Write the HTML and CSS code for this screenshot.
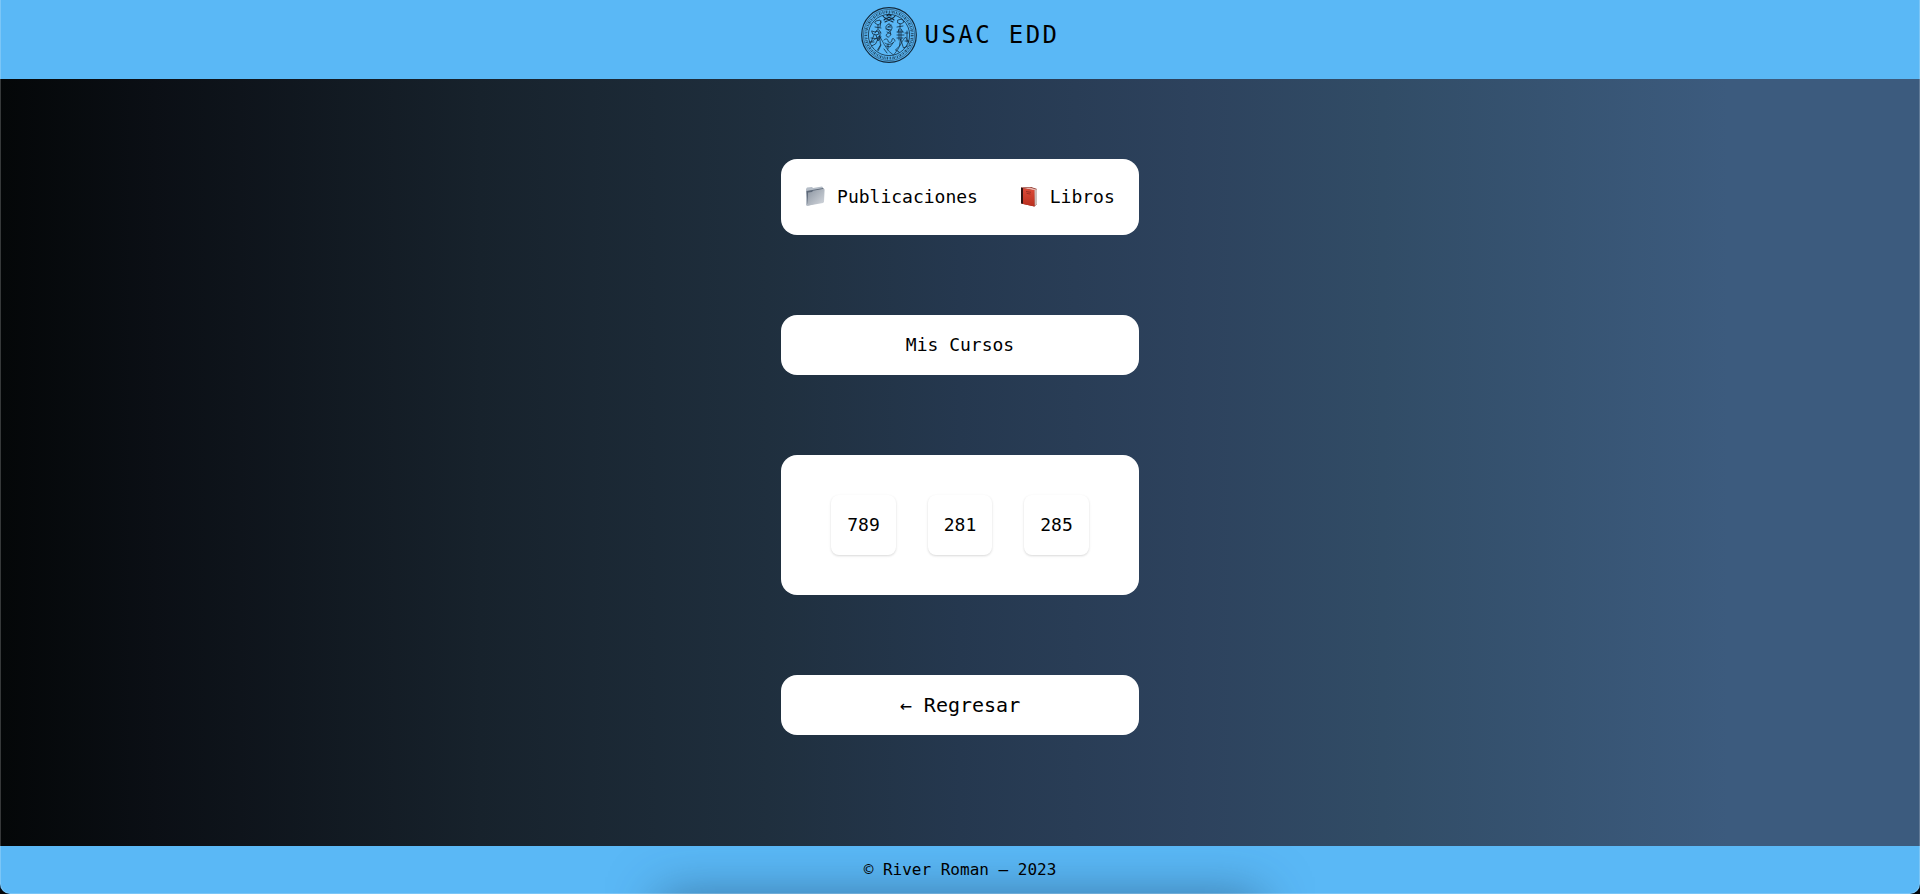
FILE: index.html
```html
<!DOCTYPE html>
<html lang="es">
<head>
<meta charset="utf-8">
<meta name="viewport" content="width=device-width, initial-scale=1">
<title>USAC EDD</title>
<link rel="stylesheet" href="styles.css">
</head>
<body>
<div class="page">
  <header class="header">
    <svg class="seal" viewBox="0 0 56 56" aria-hidden="true" fill="none" stroke="#12293c">
      <circle cx="28" cy="28" r="27.3" stroke-width="1.2"/>
      <circle cx="28" cy="28" r="25.6" stroke-width=".5"/>
      <circle cx="28" cy="28" r="23.2" stroke-width="2.800" stroke-dasharray="1 .8 .5 .9 1.3 .7 .6 1" opacity=".75"/>
      <circle cx="28" cy="28" r="20.6" stroke-width=".8"/>
      <g stroke-width=".8" stroke-linecap="round" stroke-linejoin="round">
        <path d="M22 9c2 3 4 3 6 1 2 2 4 2 6-1M23 13c3-3 7-3 10 0M24 11l8 4M32 11l-8 4M26 9l2-2 2 2M26 8h4" stroke-width="1.100"/>
        <path d="M28 17c-4 1-4 5-1 6s1 3-1 4 0 4 2 3m0-13c3 1 4 4 2 6s1 4-1 6M27 20h3M26 25l4 2M30 18l-3 2M25 22l5 1"/>
        <path d="M15 14l4-1 1 3-3 2-3-2zM17 18v5m-3-3 6 1M16 23l-2 3m4-3 2 3M20 14l-1 6"/>
        <path d="M37 13l4-1 2 3-3 2-3-1zM39 17v5m-3-2 6-1M38 22l-1 3m3-3 2 3"/>
        <path d="M11 24l3 1 3-1 1 3-3 1-3-1zM13 28l-3 7m5-7 2 6 3-4M10 31l8 1M9 35h4M19 25v5"/>
        <path d="M38 23v10m2-10v10M36 25h6M36 28h7M36 31h6M46 24v11m-2-9h3M44 34h4"/>
        <path d="M8.500 36l3-2 7-5 5 9 4 6 5 4 4-5 5-9 3-4 4 7" opacity=".85"/>
        <path d="M18.500 29l-4 8-4 2m8-10 1 9-3 5m18 0 4-4 1-7 3 9 4-2M20 38l-3 6m6-2 3 4M35 43l3 2"/>
        <path d="M23 33c2-2 4-1 4 1s4 2 4-1 3-1 3 1M24 36c2 2 6 2 9-1M25 39l4 1 3-4M27 37v5"/>
      </g>
    </svg>
    <h1 class="brand">USAC EDD</h1>
  </header>
  <main class="main">
    <div class="stack">
      <nav class="card menu" aria-label="Secciones">
        <a class="menu-link" href="#publicaciones">
          <svg class="emoji" viewBox="0 0 21 21" aria-hidden="true">
            <defs>
              <linearGradient id="folder" x1="0" y1="0" x2="1" y2="1"><stop stop-color="#8c95a1"/><stop offset="1" stop-color="#d5d9df"/></linearGradient>
            </defs>
            <path d="M1 3l1-1.500 5-.5 1 1L17 .6l1 1v14L2 20l-1-1z" fill="#b5bdc7"/>
            <path d="M1.500 5L18.500 2v3L2.500 18z" fill="#5d6878"/>
            <path d="M3 6.500l4-.6 1-1.200L19 2.800l.6.6-.6 12.600-1 1L2.500 19.800z" fill="url(#folder)"/>
          </svg>
          Publicaciones</a>
        <a class="menu-link" href="#libros">
          <svg class="emoji" viewBox="0 0 21 21" aria-hidden="true">
            <defs>
              <linearGradient id="cover" x1="0" y1="0" x2="0" y2="1"><stop stop-color="#dc4b39"/><stop offset="1" stop-color="#b92f1e"/></linearGradient>
            </defs>
            <path d="M3 1.500l10-.5 6 2v15l-2.500 2.500L3 17.500z" fill="#86291f"/>
            <path d="M16 4.500l3-1.500v15l-2.500 2z" fill="#cbbfbc"/>
            <path d="M5 2l7-.5 6.500 2-2 1z" fill="#e9b6ad"/>
            <path d="M3 1.500l2 .8v15.500l-2-.5z" fill="#2e1513"/>
            <path d="M5 2.300l11.500 2v16.200L5 17.900z" fill="url(#cover)"/>
            <path d="M8 5.500l5 .8M8.500 7.300l4 .8" stroke="#8d2b20" stroke-width=".8"/>
          </svg>
          Libros</a>
      </nav>
      <h2 class="card title">Mis Cursos</h2>
      <div class="card courses">
        <button class="course" type="button">789</button>
        <button class="course" type="button">281</button>
        <button class="course" type="button">285</button>
      </div>
      <a class="card back" href="#inicio">← Regresar</a>
    </div>
  </main>
  <footer class="footer">© River Roman – 2023</footer>
</div>
</body>
</html>
```
FILE: styles.css
```css
* {
  box-sizing: border-box;
}

html {
  background: #05080b;
}

body {
  margin: 0;
  color: #000;
  font-family: "DejaVu Sans Mono", Menlo, monospace;
  font-size: 18px;
  line-height: 28px;
}

.page {
  position: relative;
  display: flex;
  flex-direction: column;
  min-height: 100vh;
  overflow: hidden;
  border-radius: 0 0 10px 10px;
}

/* Thin light edge around the window */
.page::after {
  content: "";
  position: absolute;
  inset: 0;
  border: 1px solid rgba(255, 255, 255, 0.2);
  border-top: 0;
  border-radius: inherit;
  pointer-events: none;
}

.header {
  display: flex;
  justify-content: center;
  align-items: center;
  gap: 8px;
  padding: 7px 0 16px;
  background: #5ab8f6;
}

.seal {
  width: 56px;
  height: 56px;
}

.brand {
  margin: 0;
  font-size: 24px;
  font-weight: 400;
  line-height: 32px;
  letter-spacing: 0.1em;
}

.main {
  display: flex;
  flex: 1;
  justify-content: center;
  align-items: flex-start;
  padding: 80px 16px;
  background: linear-gradient(90deg, #040708 0%, #0b0f15 8%, #17222c 25%, #1f2f3e 40%, #25384f 50%, #2d425d 62%, #314c66 72%, #3c5b7e 90%);
}

.stack {
  display: flex;
  flex-direction: column;
  gap: 80px;
}

.card {
  margin: 0;
  padding: 16px 24px;
  border-radius: 16px;
  background: #fff;
  color: inherit;
  text-align: center;
  text-decoration: none;
}

.menu {
  display: flex;
  gap: 40px;
  padding: 24px;
}

.menu-link {
  color: inherit;
  text-decoration: none;
  white-space: nowrap;
}

.emoji {
  width: 21px;
  height: 21px;
  vertical-align: -4px;
}

.title {
  font-size: 18px;
  font-weight: 400;
}

.courses {
  display: flex;
  justify-content: center;
  gap: 32px;
  padding: 40px;
}

.course {
  padding: 16px;
  border: 0;
  border-radius: 8px;
  background: #fff;
  box-shadow: 0 1px 3px rgba(0, 0, 0, 0.1), 0 1px 2px rgba(0, 0, 0, 0.06);
  color: inherit;
  font: inherit;
}

.back {
  font-size: 20px;
}

.footer {
  position: relative;
  z-index: 0;
  padding: 12px;
  overflow: hidden;
  background: #5ab8f6;
  font-size: 16px;
  line-height: 24px;
  text-align: center;
}

/* Soft shadow rising from the bottom edge, behind the text */
.footer::before {
  content: "";
  position: absolute;
  z-index: -1;
  top: 100%;
  left: 50%;
  width: 600px;
  height: 60px;
  margin-left: -300px;
  box-shadow: 0 0 50px rgba(30, 60, 90, 0.5);
}
```
